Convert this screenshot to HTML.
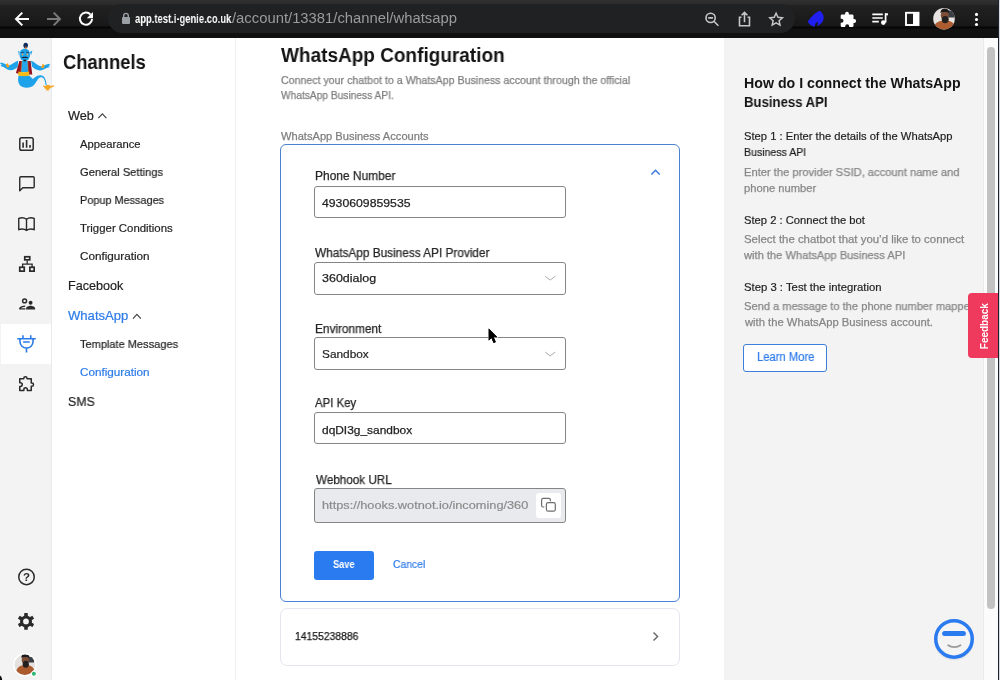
<!DOCTYPE html>
<html><head><meta charset="utf-8"><title>WhatsApp Configuration</title>
<style>
*{box-sizing:border-box;margin:0;padding:0}
html,body{width:1000px;height:680px;overflow:hidden;background:#fff}
body{font-family:"Liberation Sans",sans-serif;color:#1b1b1b;position:relative}
.abs{position:absolute}
.t{position:absolute;white-space:nowrap;line-height:1;transform-origin:0 50%;will-change:transform}
#chrome{position:absolute;left:0;top:0;width:998px;height:38px;background:linear-gradient(#303030 0,#2b2b2b 4px,#212121 6px,#181818 26px,#050505 27px,#050505 28px,#111 29px,#101010 38px)}
#pill{position:absolute;left:108px;top:4px;width:687px;height:29px;border-radius:15px;background:#1f2122}
#strip{position:absolute;left:0;top:38px;width:52px;height:642px;background:#f3f3f3;border-right:1px solid #e9eaee}
#active{position:absolute;left:1px;top:324px;width:50px;height:40px;background:#fff}
#side{position:absolute;left:52px;top:38px;width:184px;height:642px;background:#fff;border-right:1px solid #eceef1}
#right{position:absolute;left:724px;top:38px;width:260px;height:642px;background:#f3f3f3}
#sb{position:absolute;left:983px;top:38px;width:15px;height:642px;background:#fbfbfb;border-left:1px solid #e9e9e9}
#thumb{position:absolute;left:987px;top:47px;width:8px;height:562px;border-radius:4px;background:#c2c2c2}
#edge{position:absolute;left:998px;top:0;width:2px;height:680px;background:linear-gradient(90deg,#1b2230 0,#1b2230 1px,#d4d6da 1px)}
.inp{position:absolute;left:314px;width:252px;border:1px solid #858585;border-radius:3px;background:#fff}
svg{position:absolute;left:0;top:0;overflow:visible}
</style></head><body>

<div id="chrome"><div id="pill"></div></div>
<div id="strip"></div><div id="active"></div>
<div id="side"></div>
<div id="right"></div>
<div id="sb"></div><div id="thumb"></div>

<div class="abs" style="left:280px;top:144px;width:400px;height:458px;border:1.3px solid #4b82d6;border-radius:6px;background:#fff"></div>
<div class="inp" style="top:186px;height:32px"></div>
<div class="inp" style="top:262px;height:33px"></div>
<div class="inp" style="top:337px;height:33px"></div>
<div class="inp" style="top:412px;height:32px"></div>
<div class="inp" style="top:488px;height:35px;background:#e9eaee"></div>
<div class="abs" style="left:536px;top:493px;width:25px;height:25px;background:#fff;border-radius:3px"></div>
<div class="abs" style="left:314px;top:551px;width:60px;height:29px;background:#2b7bf0;border-radius:3px"></div>
<div class="abs" style="left:280px;top:608px;width:400px;height:58px;border:1px solid #e4e7ee;border-radius:7px;background:#fff"></div>
<div class="abs" style="left:743px;top:344px;width:84px;height:28px;border:1px solid #3f7fdc;border-radius:3px;background:#fff"></div>
<div class="t" style="left:62.80px;top:53px;font-size:19.8px;color:#141414;font-weight:bold;transform:scaleX(0.9300);">Channels</div>
<div class="t" style="left:67.80px;top:110px;font-size:12.6px;color:#1f1f1f;transform:scaleX(1.0092);-webkit-text-stroke:.2px #1f1f1f;">Web</div>
<div class="t" style="left:79.70px;top:139px;font-size:11.2px;color:#1f1f1f;transform:scaleX(1.0031);-webkit-text-stroke:.2px #1f1f1f;">Appearance</div>
<div class="t" style="left:79.70px;top:167px;font-size:11.2px;color:#1f1f1f;transform:scaleX(0.9960);-webkit-text-stroke:.2px #1f1f1f;">General Settings</div>
<div class="t" style="left:79.70px;top:195px;font-size:11.2px;color:#1f1f1f;transform:scaleX(0.9718);-webkit-text-stroke:.2px #1f1f1f;">Popup Messages</div>
<div class="t" style="left:79.70px;top:223px;font-size:11.2px;color:#1f1f1f;transform:scaleX(1.0186);-webkit-text-stroke:.2px #1f1f1f;">Trigger Conditions</div>
<div class="t" style="left:79.70px;top:251px;font-size:11.2px;color:#1f1f1f;transform:scaleX(1.0464);-webkit-text-stroke:.2px #1f1f1f;">Configuration</div>
<div class="t" style="left:67.60px;top:280px;font-size:12.6px;color:#1f1f1f;transform:scaleX(0.9980);-webkit-text-stroke:.2px #1f1f1f;">Facebook</div>
<div class="t" style="left:67.80px;top:310px;font-size:12.6px;color:#2d7be8;transform:scaleX(1.0380);-webkit-text-stroke:.2px #2d7be8;">WhatsApp</div>
<div class="t" style="left:79.70px;top:339px;font-size:11.2px;color:#1f1f1f;transform:scaleX(0.9850);-webkit-text-stroke:.2px #1f1f1f;">Template Messages</div>
<div class="t" style="left:79.70px;top:367px;font-size:11.2px;color:#2d7be8;transform:scaleX(1.0464);-webkit-text-stroke:.2px #2d7be8;">Configuration</div>
<div class="t" style="left:67.80px;top:396px;font-size:12.6px;color:#1f1f1f;transform:scaleX(0.9780);-webkit-text-stroke:.2px #1f1f1f;">SMS</div>
<div class="t" style="left:280.50px;top:46px;font-size:19.4px;color:#141414;font-weight:bold;transform:scaleX(0.9794);">WhatsApp Configuration</div>
<div class="t" style="left:280.50px;top:75px;font-size:10.8px;color:#7f7f7f;transform:scaleX(0.9833);-webkit-text-stroke:.25px #7f7f7f;">Connect your chatbot to a WhatsApp Business account through the official</div>
<div class="t" style="left:280.50px;top:90px;font-size:10.8px;color:#7f7f7f;transform:scaleX(0.9440);-webkit-text-stroke:.25px #7f7f7f;">WhatsApp Business API.</div>
<div class="t" style="left:280.50px;top:131px;font-size:10.8px;color:#7f7f7f;transform:scaleX(1.0288);-webkit-text-stroke:.25px #7f7f7f;">WhatsApp Business Accounts</div>
<div class="t" style="left:314.80px;top:170px;font-size:12px;color:#262626;transform:scaleX(0.9961);-webkit-text-stroke:.25px #262626;">Phone Number</div>
<div class="t" style="left:322.40px;top:198px;font-size:11.3px;color:#1f1f1f;transform:scaleX(1.0836);-webkit-text-stroke:.25px #1f1f1f;">4930609859535</div>
<div class="t" style="left:314.80px;top:247px;font-size:12px;color:#262626;transform:scaleX(0.9833);-webkit-text-stroke:.25px #262626;">WhatsApp Business API Provider</div>
<div class="t" style="left:322.40px;top:273px;font-size:11.3px;color:#1f1f1f;transform:scaleX(1.1044);-webkit-text-stroke:.25px #1f1f1f;">360dialog</div>
<div class="t" style="left:314.80px;top:323px;font-size:12px;color:#262626;transform:scaleX(0.9848);-webkit-text-stroke:.25px #262626;">Environment</div>
<div class="t" style="left:322.40px;top:349px;font-size:11.8px;color:#1f1f1f;transform:scaleX(1.0027);-webkit-text-stroke:.2px #1f1f1f;">Sandbox</div>
<div class="t" style="left:314.80px;top:397px;font-size:12px;color:#262626;transform:scaleX(0.9503);-webkit-text-stroke:.25px #262626;">API Key</div>
<div class="t" style="left:322.40px;top:425px;font-size:11.3px;color:#1f1f1f;transform:scaleX(1.0551);-webkit-text-stroke:.25px #1f1f1f;">dqDI3g_sandbox</div>
<div class="t" style="left:316.00px;top:474px;font-size:12.3px;color:#262626;transform:scaleX(0.9486);-webkit-text-stroke:.25px #262626;">Webhook URL</div>
<div class="t" style="left:322.40px;top:499px;font-size:11.6px;color:#8b8b8b;transform:scaleX(1.1000);-webkit-text-stroke:.2px #8b8b8b;">https://hooks.wotnot.io/incoming/360</div>
<div class="t" style="left:333.00px;top:560px;font-size:10.3px;color:#ffffff;font-weight:bold;transform:scaleX(0.9004);">Save</div>
<div class="t" style="left:393.00px;top:559px;font-size:10.7px;color:#2d7be8;transform:scaleX(0.9698);-webkit-text-stroke:.2px #2d7be8;">Cancel</div>
<div class="t" style="left:294.60px;top:631px;font-size:10.8px;color:#161616;transform:scaleX(0.9599);-webkit-text-stroke:.25px #161616;">14155238886</div>
<div class="t" style="left:743.50px;top:76px;font-size:14px;color:#141414;font-weight:bold;transform:scaleX(1.0130);">How do I connect the WhatsApp</div>
<div class="t" style="left:743.50px;top:95px;font-size:14px;color:#141414;font-weight:bold;transform:scaleX(0.9392);">Business API</div>
<div class="t" style="left:743.50px;top:131px;font-size:11.2px;color:#1f1f1f;transform:scaleX(1.0009);-webkit-text-stroke:.2px #1f1f1f;">Step 1 : Enter the details of the WhatsApp</div>
<div class="t" style="left:743.50px;top:147px;font-size:11.2px;color:#1f1f1f;transform:scaleX(0.9439);-webkit-text-stroke:.2px #1f1f1f;">Business API</div>
<div class="t" style="left:743.50px;top:167px;font-size:11.2px;color:#868686;transform:scaleX(0.9959);-webkit-text-stroke:.25px #868686;">Enter the provider SSID, account name and</div>
<div class="t" style="left:743.50px;top:183px;font-size:11.2px;color:#868686;transform:scaleX(0.9983);-webkit-text-stroke:.25px #868686;">phone number</div>
<div class="t" style="left:743.50px;top:215px;font-size:11.2px;color:#1f1f1f;transform:scaleX(1.0012);-webkit-text-stroke:.2px #1f1f1f;">Step 2 : Connect the bot</div>
<div class="t" style="left:743.50px;top:234px;font-size:11.2px;color:#868686;transform:scaleX(1.0198);-webkit-text-stroke:.25px #868686;">Select the chatbot that you’d like to connect</div>
<div class="t" style="left:744.49px;top:250px;font-size:11.2px;color:#868686;transform:scaleX(0.9938);-webkit-text-stroke:.25px #868686;">with the WhatsApp Business API</div>
<div class="t" style="left:743.50px;top:282px;font-size:11.2px;color:#1f1f1f;transform:scaleX(1.0112);-webkit-text-stroke:.2px #1f1f1f;">Step 3 : Test the integration</div>
<div class="t" style="left:743.50px;top:301px;font-size:11.2px;color:#868686;transform:scaleX(0.9917);-webkit-text-stroke:.25px #868686;">Send a message to the phone number mapped</div>
<div class="t" style="left:744.50px;top:317px;font-size:11.2px;color:#868686;transform:scaleX(1.0039);-webkit-text-stroke:.25px #868686;">with the WhatsApp Business account.</div>
<div class="t" style="left:756.50px;top:351px;font-size:12px;color:#2d7be8;transform:scaleX(0.9353);-webkit-text-stroke:.2px #2d7be8;">Learn More</div>
<div class="t" style="left:134.60px;top:13px;font-size:12.4px;color:#ffffff;font-weight:bold;transform:scaleX(0.7603);">app.test.i-genie.co.uk</div>
<div class="t" style="left:232.00px;top:11px;font-size:14px;color:#9b9b9b;transform:scaleX(1.0583);">/account/13381/channel/whatsapp</div>
<svg width="1000" height="680" viewBox="0 0 1000 680" fill="none" stroke-linecap="round" stroke-linejoin="round">
<!-- chrome icons -->
<g stroke="#fff" stroke-width="2" stroke-linecap="butt" stroke-linejoin="miter">
<path d="M29 19H16.5M22.3 12.6L16 19l6.3 6.4"/>
<path d="M47 19h12.5M53.7 12.6L60 19l-6.3 6.4" stroke="#7a7a7a"/>
<path d="M90.6 14.6A6.1 6.1 0 1 0 92.1 19"/>
</g>
<path d="M93 12v6.2h-6.2z" fill="#fff"/>
<g fill="#9aa0a6"><rect x="122" y="17" width="8" height="7" rx="1"/></g>
<path d="M123.7 17.5v-1.8a2.3 2.3 0 0 1 4.6 0v1.8" stroke="#9aa0a6" stroke-width="1.4"/>
<g stroke="#c7c7c7" stroke-width="1.6" stroke-linecap="butt">
<circle cx="710.6" cy="17.9" r="4.6"/><path d="M713.9 21.3l4.5 4.5M708.2 17.9h4.8"/>
<path d="M741.5 17.3h-2v8.4h10v-8.4h-2M744.5 22.3v-9.5M741.6 15.3l2.9-2.9 2.9 2.9" stroke-linejoin="miter"/>
<path d="M776.1 13.2l1.9 4 4.4.5-3.3 3 .9 4.4-3.9-2.2-3.9 2.2.9-4.4-3.3-3 4.4-.5z" stroke-width="1.5" stroke-linejoin="miter"/>
</g>
<path d="M820 11c3 2 4.500 5.500 3.300 9-.9 2.800-3.300 5-6.300 6 1-1.500 1-3 .2-4.200-.8 1.200-2 1.700-2.200 3.200-.3 1-.3 1.400-.1 1.700-3.500-.600-6.500-2.800-7-5.500 1.500-1.500 4-5 6.500-7.200 2-1.800 4-2.700 5.600-3z" fill="#1f1ff0"/>
<path d="M847 11.800a1.900 1.900 0 0 1 1.900 1.900v.8h3.300a1.300 1.300 0 0 1 1.300 1.300v3.100h.6a2 2 0 0 1 0 4h-.6v2.900a1.300 1.300 0 0 1-1.300 1.300h-3v-.8a2 2 0 0 0-4 0v.8h-3.200a1.300 1.300 0 0 1-1.300-1.300v-3h.8a2 2 0 0 0 0-4h-.8v-3a1.300 1.300 0 0 1 1.300-1.300h3.100v-.8a1.900 1.900 0 0 1 1.900-1.900z" fill="#fff"/>
<g stroke="#fff" stroke-width="1.700" stroke-linecap="butt"><path d="M872.300 14.300h10.500M872.300 18h10.500M872.300 21.700h6.500M885.600 13.500v9"/><path d="M885 14.300h3" stroke-width="2"/></g>
<circle cx="883.300" cy="22.600" r="2.300" fill="#fff"/>
<rect x="906" y="12.800" width="12.500" height="12.200" stroke="#fff" stroke-width="1.900" stroke-linejoin="miter"/><rect x="913" y="13" width="5" height="12" fill="#fff"/>
<clipPath id="av1"><circle cx="944" cy="18.700" r="10.800"/></clipPath>
<g clip-path="url(#av1)"><rect x="932" y="7" width="24" height="24" fill="#e6e3e0"/><rect x="947.500" y="10.500" width="8" height="7" fill="#3a3f45"/><path d="M933 31c0-7.500 5-10.500 12-10.500s11 3 11 10.500z" fill="#ad5d30"/><ellipse cx="944.800" cy="15.200" rx="4" ry="5" fill="#7d4e38"/><path d="M940.500 13c-.6-6 9.200-6 8.600 0-1.600-1.300-7-1.300-8.600 0z" fill="#1d1a1a"/><ellipse cx="945.200" cy="19.600" rx="3.500" ry="3.700" fill="#24201f"/></g>
<g fill="#fff"><circle cx="976.500" cy="14.400" r="1.550"/><circle cx="976.500" cy="19.450" r="1.550"/><circle cx="976.500" cy="24.500" r="1.550"/></g>

<!-- genie -->
<g>
<path d="M18.600 75.500c-1.200 4.500-.3 9.500 3.400 11.300 4.200 1.900 9.300 1 12-1.700 3-3 3.500-7.500 7-7.800 2.200-.1 3.300 1.800 3.900 4.300l.9 3.800 1-.3-.8-3.700c-.7-3.300-2.300-6.200-5.600-6.100-2.800.1-5 1.600-7.600 3.700l-3.600-3.500z" fill="#1ea3ea"/>
<path d="M18.200 60.800C14 62 11.300 65.200 8.500 65.500L3.500 63.200 1 62.500 0 63.800l2 1L.3 66l2.700.8 4.500 2.800c4 1.400 7.500 0 10.200-2.600zM31 60.800c4 1.200 7 5.700 10.500 5.500l5-1.800 2.500-.8 1.200 1.200-1.900 1 1.700 1.200-2.800.6-4.700 2.300c-4 1.200-8-.5-10.500-3.500z" fill="#1ea3ea"/>
<rect x="6.300" y="63.600" width="2.400" height="3.800" transform="rotate(-22 7.500 65.500)" fill="#f5a21d"/><rect x="41.700" y="64.300" width="2.400" height="3.800" transform="rotate(22 42.900 66.200)" fill="#f5a21d"/>
<path d="M19.400 61h11.200l.6 11h-12z" fill="#23a6ec"/>
<path d="M19.400 61h2.500l-1.200 13.300-4.800-1.400zM27.800 61h2.700l1.800 13.500h-3.900z" fill="#94121f"/>
<path d="M21.900 61l-1.200 13.300M27.800 61l.6 13.500" stroke="#e8861c" stroke-width=".5"/>
<path d="M18.300 71.500c3.500 1 7.500 1 10.900 0v4c-3.400 1-7.400 1-10.900 0z" fill="#f6bb14"/>
<ellipse cx="24.800" cy="54.800" rx="5.300" ry="6.400" fill="#1ea3ea"/>
<path d="M19.700 52l-1.600-1.600.7 4.600zM29.900 52l2.500-1.600-1.300 4.900z" fill="#1ea3ea"/>
<ellipse cx="25.700" cy="45.400" rx="2.300" ry="2.600" fill="#0e2d5e"/><rect x="25.200" y="46.400" width="1.200" height="2.600" fill="#d46a1c"/>
<path d="M21.300 57.600c1.500-1.300 5.500-1.300 7 0-.8.900-2.200.4-3.500.4s-2.700.5-3.500-.4z" fill="#17213b"/><ellipse cx="24.800" cy="60.400" rx="1.500" ry="1" fill="#17213b"/>
<circle cx="22.500" cy="54.500" r=".9" fill="#e0a860"/><circle cx="27.400" cy="54.500" r=".9" fill="#e0a860"/>
<path d="M21.200 52.600l2.300-.5M26.400 52.100l2.300.5" stroke="#17213b" stroke-width=".7"/>
<path d="M45 86.300c1.500-1.700 5-1.700 6 0l2.500-1.200c.8.500.4 1.600-.4 1.800l-2.300.9c-.5.900-1.500 1.400-2.300 1.600l.9 1h-3.500l.7-1c-1.200-.4-2.200-1.300-2.600-2.400-.9-.4-1.300-1.300-.5-1.700z" fill="#f5a623"/>
</g>

<!-- strip icons -->
<g stroke="#2a2a2a" stroke-width="1.500">
<rect x="19.800" y="137.650" width="13.400" height="12.700" rx="1.800"/>
<g stroke-width="1.600" stroke-linecap="butt"><path d="M23.100 142.600v5.200M26.600 140.100v7.700M30 145.100v2.700"/></g>
<path d="M19.750 190.700V177.700a1 1 0 0 1 1-1H33.200a1 1 0 0 1 1 1v9.100a1 1 0 0 1-1 1H22.800z" stroke-width="1.400"/>
<path d="M26.500 219.300c-2-1.600-5.200-1.900-7.750-.9v11.200c2.550-.9 5.750-.7 7.750.8 2-1.500 5.200-1.700 7.700-.8v-11.200c-2.500-1-5.700-.7-7.700.9zM26.500 219.300v11" stroke-width="1.400" stroke-linejoin="miter"/>
<g stroke-linecap="butt" stroke-linejoin="miter" stroke-width="1.700"><rect x="24.750" y="256.750" width="5" height="3.100"/><rect x="19.750" y="267.250" width="4.500" height="3.900"/><rect x="29.850" y="267.250" width="4.300" height="3.900"/><path d="M27.200 260.600v3.500M22.600 267v-2.900h9.500V267" stroke-width="1.300"/></g>
</g>
<g fill="#2a2a2a">
<circle cx="24.600" cy="300.900" r="1.950" fill="none" stroke="#2a2a2a" stroke-width="1.500"/>
<path d="M25.200 305.600c-2.500.1-5.300 1-6 2.500v1.400h6.200v-1.200h-4.600c.8-.8 2.800-1.400 4.400-1.500z"/>
<circle cx="30.600" cy="302.750" r="1.950"/>
<path d="M26.100 309.600v-1.100c0-1.800 2.800-2.800 4.500-2.800s4.500 1 4.500 2.800v1.100z"/>
</g>
<g stroke="#2d7be8" stroke-width="1.600" stroke-linecap="butt">
<path d="M22.950 335.250v3.300M30.750 335.250v3.300M17.250 338.750h18.500" />
<path d="M19.950 339v2.600a6.550 6.550 0 0 0 13.100 0V339M26.500 348.300v4.200"/>
<path d="M23.100 342h6.650" stroke-width="1.500"/>
</g>
<path d="M19.750 378.750h4v-.3a1.650 1.650 0 0 1 3.300 0v.3h4.200v4.300h.6a1.650 1.650 0 0 1 0 3.300h-.6v4.050h-3.900v-.9a1.750 1.750 0 0 0-3.500 0v.9h-4.100v-4h.7a1.800 1.800 0 0 0 0-3.600h-.7z" stroke="#2a2a2a" stroke-width="1.500"/>
<circle cx="26.500" cy="576.900" r="7.750" stroke="#2a2a2a" stroke-width="1.500"/>
<text x="26.500" y="581.200" text-anchor="middle" font-family="Liberation Sans, sans-serif" font-weight="bold" font-size="11.500" fill="#2a2a2a" stroke="none">?</text>
<g fill="#2a2a2a"><circle cx="26" cy="621.400" r="6"/><g><rect x="24.200" y="613" width="3.600" height="16.800" rx=".6"/><rect x="24.200" y="613" width="3.600" height="16.800" rx=".6" transform="rotate(60 26 621.400)"/><rect x="24.200" y="613" width="3.600" height="16.800" rx=".6" transform="rotate(-60 26 621.400)"/></g></g>
<circle cx="26" cy="621.400" r="2.900" fill="#f3f3f3"/>
<!-- user avatar -->
<circle cx="24.800" cy="664.700" r="11.600" fill="#fff"/>
<clipPath id="av2"><circle cx="24.800" cy="664.700" r="10.300"/></clipPath>
<g clip-path="url(#av2)"><rect x="13" y="652" width="24" height="26" fill="#e4e1de"/><rect x="28" y="657" width="6" height="5.500" fill="#3c4046"/><path d="M15 678c0-9.500 4-13 10.500-13S36 668.500 36 678z" fill="#ab5b2e"/><ellipse cx="25.300" cy="660" rx="3.600" ry="4.600" fill="#7d4e38"/><path d="M21.400 658c-.6-5.800 8.600-5.800 8 0-1.500-1.300-6.500-1.300-8 0z" fill="#1e1b1b"/><ellipse cx="25.800" cy="664.300" rx="3.100" ry="3.500" fill="#24201f"/></g>
<circle cx="33.900" cy="673.800" r="2.900" fill="#fff"/><circle cx="33.900" cy="673.800" r="2" fill="#2fb673"/>

<!-- nav chevrons -->
<path d="M98.300 118.200l4.050-4.300 4.050 4.300" stroke="#444" stroke-width="1.200" stroke-linecap="butt" stroke-linejoin="miter"/>
<path d="M133 318.600l3.900-4.300 3.900 4.300" stroke="#444" stroke-width="1.200" stroke-linecap="butt" stroke-linejoin="miter"/>
<!-- card chevrons -->
<path d="M651.400 174.600l4.150-4.300 4.150 4.300" stroke="#3b78d8" stroke-width="1.500" stroke-linecap="butt" stroke-linejoin="miter"/>
<path d="M653.500 632.600l4.100 4 -4.100 4" stroke="#666" stroke-width="1.400" stroke-linecap="butt" stroke-linejoin="miter"/>
<path d="M545.500 276.500l4.700 3.600 4.700-3.600" stroke="#a9a9a9" stroke-width="1"/>
<path d="M545.500 352.300l4.700 3.600 4.700-3.600" stroke="#a9a9a9" stroke-width="1"/>
<!-- copy icon -->
<g stroke="#6e6e6e" stroke-width="1.200"><rect x="546.400" y="502.600" width="8.900" height="8.600" rx="1.800"/><path d="M543.900 507h-.8a1.500 1.500 0 0 1-1.500-1.500v-5.600a1.500 1.500 0 0 1 1.500-1.500h5.800a1.500 1.500 0 0 1 1.500 1.500v.9"/></g>
<!-- chat widget -->
<circle cx="954" cy="640.500" r="20" fill="#000" opacity=".05"/>
<circle cx="954" cy="638.900" r="18.250" fill="#f4f4f4" stroke="#2b7bf0" stroke-width="3.500"/>
<rect x="942.100" y="631" width="23.800" height="5" rx="2.500" fill="#2b7bf0"/>
<path d="M948.200 645.300c3.500 2.400 8.800 2.400 12.300 0" stroke="#9a9a9a" stroke-width="1.800"/>
</svg>

<div class="abs" style="left:967.600px;top:293.200px;width:30.400px;height:65px;background:#ef3a5d;border-radius:4px 0 0 4px"></div>
<svg width="1000" height="680" viewBox="0 0 1000 680"><text transform="translate(988.100 349.200) rotate(-90)" font-family="Liberation Sans, sans-serif" font-weight="bold" font-size="11.400" fill="#fff" textLength="46" lengthAdjust="spacingAndGlyphs">Feedback</text></svg>
<svg width="1000" height="680" viewBox="0 0 1000 680"><path transform="translate(488.700 328.600)" d="M0 0v11.900l2.800-2.500 2.100 4.900 2.200-.9-2.100-4.800h3.700z" fill="#000" stroke="#fff" stroke-width="1.300" stroke-linejoin="round" paint-order="stroke"/><path transform="translate(488.700 328.600)" d="M0 0v11.900l2.800-2.500 2.100 4.900 2.200-.9-2.100-4.800h3.700z" fill="#000"/></svg>
<div id="edge"></div>
<div class="abs" style="left:-3px;top:675px;width:5px;height:8px;background:#111;border-radius:0 3px 0 0;transform:skewX(12deg)"></div>
</body></html>
